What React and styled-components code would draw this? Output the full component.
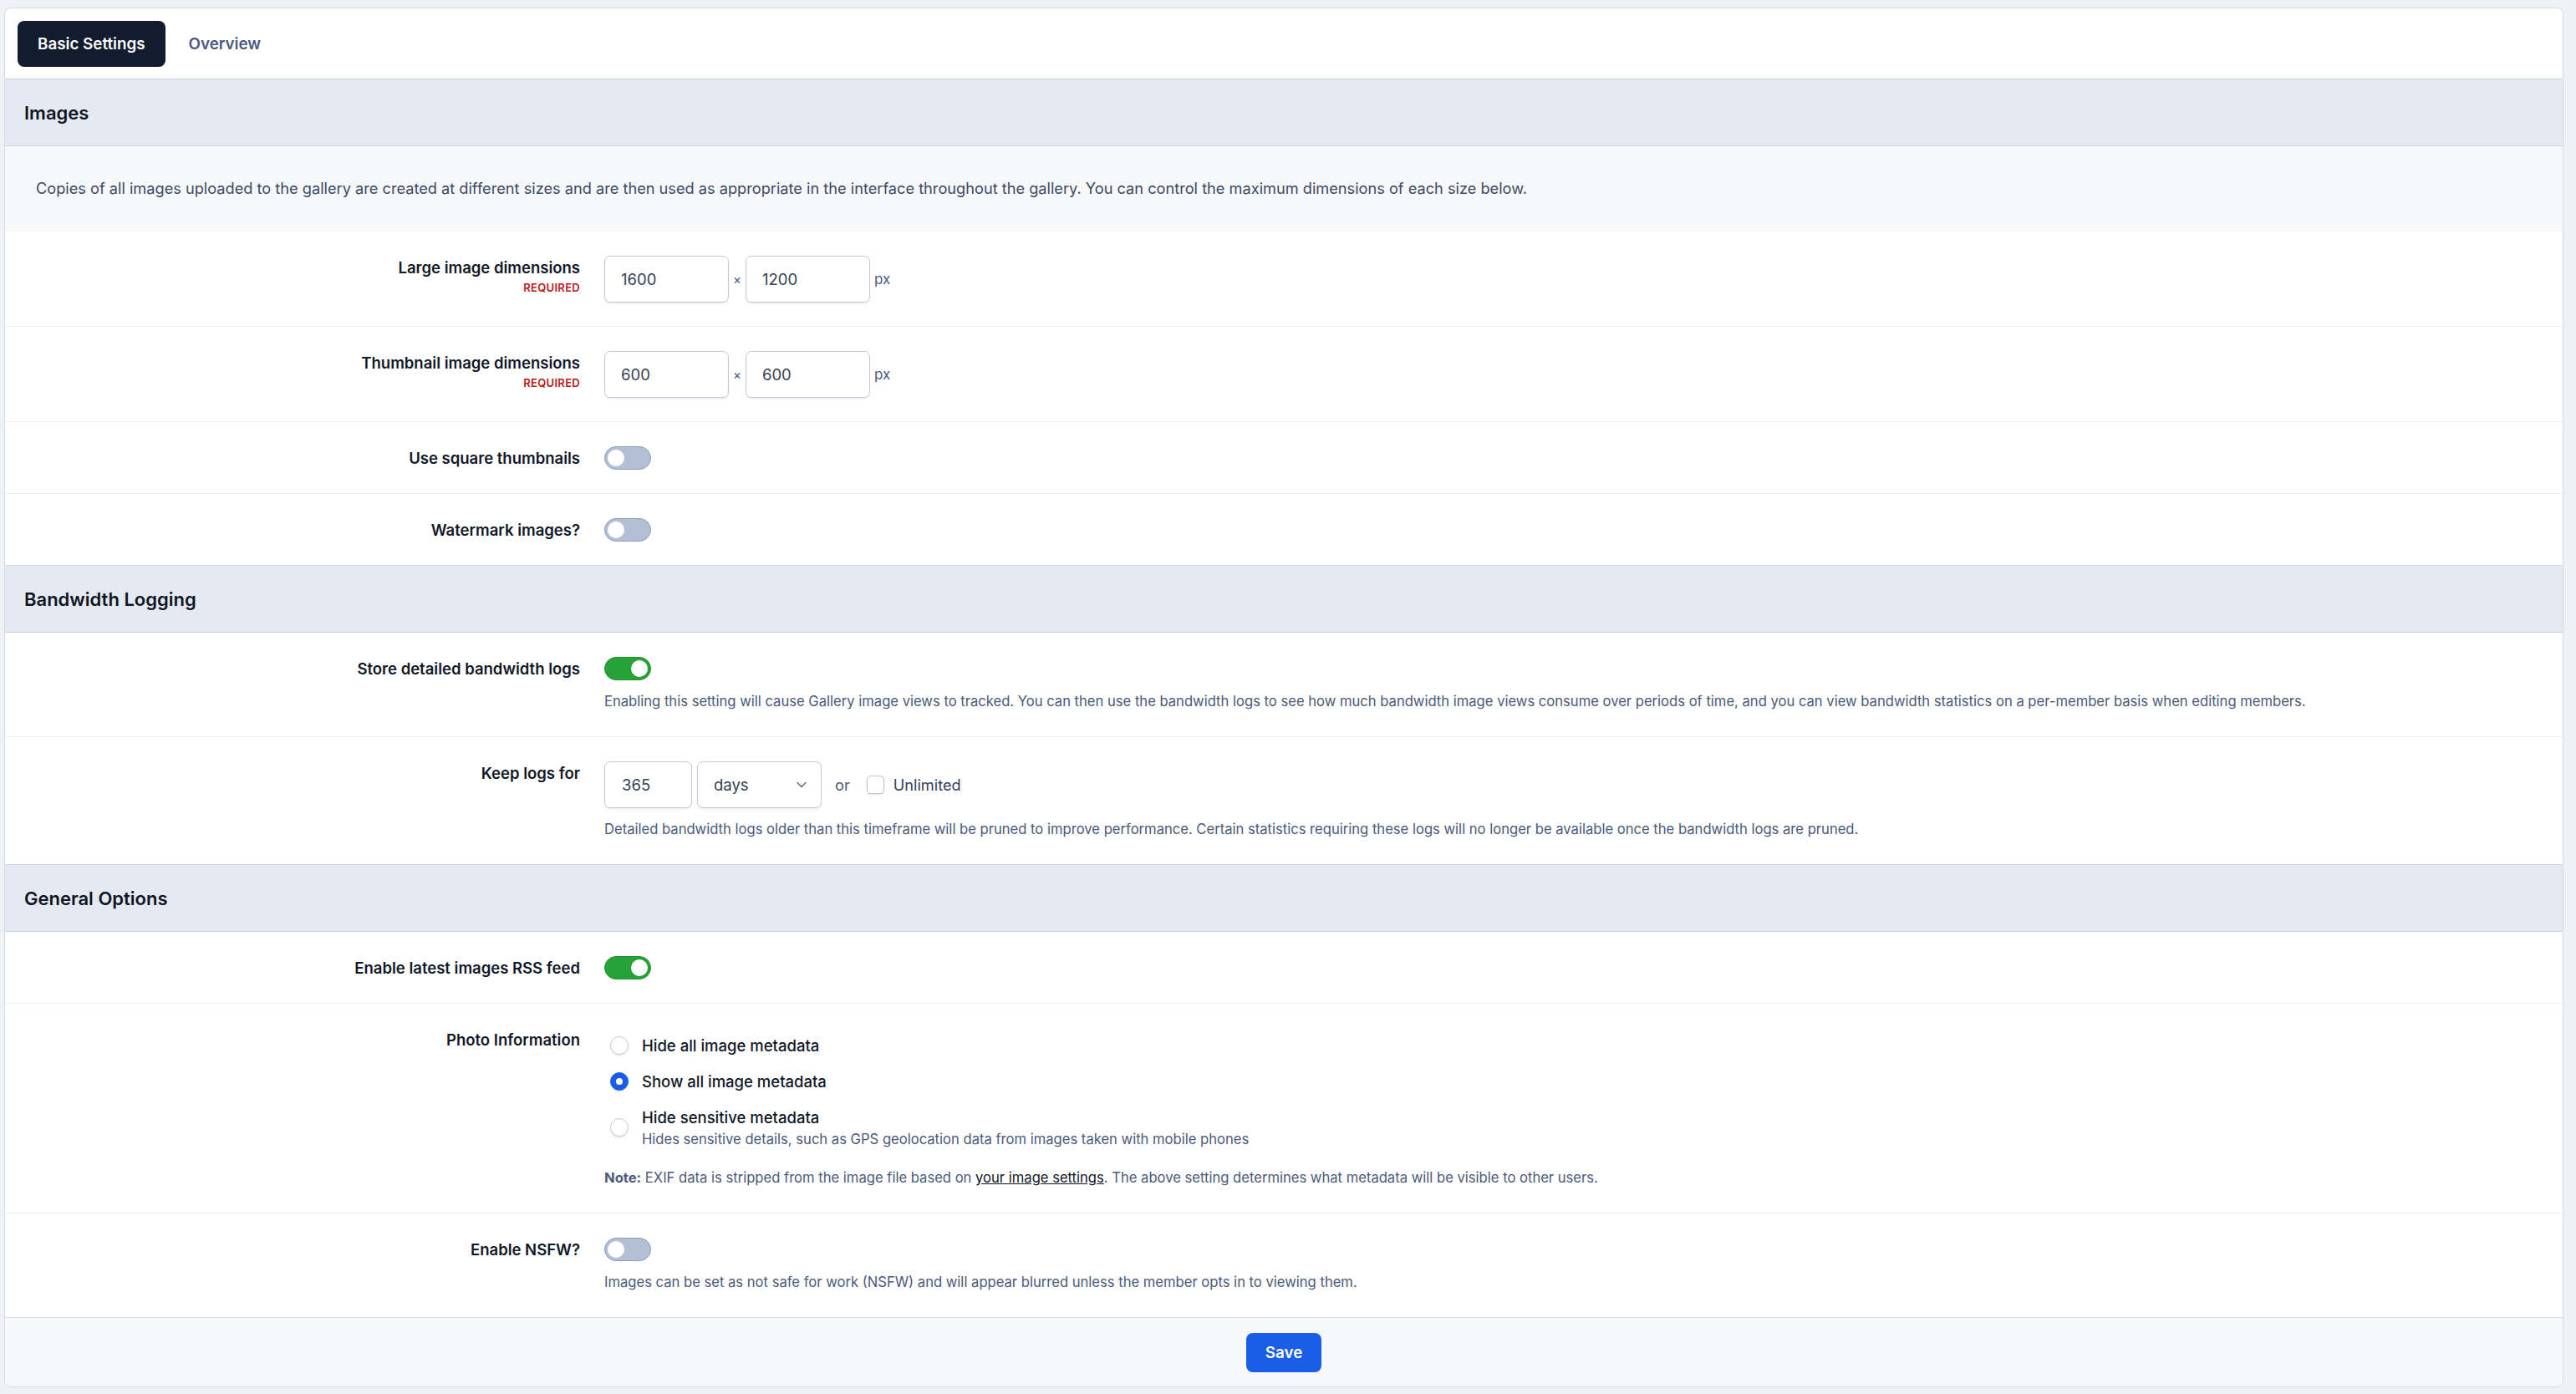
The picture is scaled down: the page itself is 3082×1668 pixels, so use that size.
import React from "react";
import styled, { createGlobalStyle, css } from "styled-components";

const GlobalStyle = createGlobalStyle`
  * { box-sizing: border-box; }
  html, body { margin: 0; padding: 0; }
  body {
    background: #eef1f5;
    font-family: Inter, "Noto Sans", "Liberation Sans", sans-serif;
    color: #111827;
    -webkit-font-smoothing: antialiased;
  }
`;

const Page = styled.div`
  padding: 9px 15px 7px 5px;
`;

const Card = styled.div`
  background: #ffffff;
  border: 1px solid #d6dce6;
  border-radius: 8px;
  overflow: hidden;
`;

const TabBar = styled.div`
  display: flex;
  gap: 4px;
  padding: 15px 15px 14px;
`;

const Tab = styled.button`
  height: 55px;
  padding: 0 24px;
  border: none;
  border-radius: 8px;
  font-family: inherit;
  font-size: 18.8px;
  font-weight: 600;
  cursor: pointer;
  background: ${(p) => (p.$active ? "#131c2e" : "transparent")};
  color: ${(p) => (p.$active ? "#ffffff" : "#4a5a7f")};
`;

const SectionHeader = styled.h2`
  margin: 0;
  height: 81px;
  display: flex;
  align-items: center;
  padding: 0 23px;
  background: #e5eaf2;
  border-top: 1px solid #ccd5e3;
  border-bottom: 1px solid #c6d1e2;
  font-size: 22px;
  font-weight: 600;
  color: #0f1523;
`;

const Description = styled.p`
  margin: 0;
  padding: 37px 37px 38px;
  background: #f7f8fa;
  font-size: 18.2px;
  line-height: 27px;
  color: #3d4a63;
`;

const Row = styled.div`
  display: grid;
  grid-template-columns: 688px 1fr;
  column-gap: 29px;
  padding: 29px 24px 28px 0;
  border-bottom: 1px solid #eceff3;
  &:last-child { border-bottom: none; }
`;

const LabelCol = styled.div`
  display: flex;
  flex-direction: column;
  align-items: flex-end;
  text-align: right;
`;

const Label = styled.label`
  font-size: 18.5px;
  line-height: 28px;
  font-weight: 600;
  color: #111827;
`;

const Required = styled.span`
  margin-top: 2px;
  font-size: 13px;
  line-height: 16px;
  font-weight: 600;
  letter-spacing: 0.3px;
  color: #b42020;
  text-transform: uppercase;
`;

const Controls = styled.div`
  display: flex;
  flex-direction: column;
  align-items: flex-start;
  min-width: 0;
`;

const InlineGroup = styled.div`
  display: flex;
  align-items: center;
`;

const fieldBase = css`
  height: 56px;
  border: 1px solid #c3c9d4;
  border-radius: 7px;
  background: #fff;
  box-shadow: 0 2px 2px rgba(15, 23, 42, 0.06);
  font-family: inherit;
  font-size: 18.5px;
  color: #334155;
`;

const TextInput = styled.input`
  ${fieldBase};
  width: ${(p) => p.$w || 149}px;
  padding: 0 ${(p) => p.$px || 19}px;
  outline: none;
`;

const Sep = styled.span`
  margin: 0 ${(p) => p.$m || 6}px;
  font-size: ${(p) => p.$fs || 17}px;
  color: #4a5a78;
`;

const SelectBox = styled.div`
  ${fieldBase};
  width: 149px;
  margin-left: 6px;
  display: flex;
  align-items: center;
  justify-content: space-between;
  padding: 0 17px 0 19px;
`;

const Checkbox = styled.span`
  display: inline-block;
  width: 21px;
  height: 22px;
  border: 1px solid #b9c1cd;
  border-radius: 5px;
  background: #fff;
  box-shadow: 0 2px 2px rgba(15, 23, 42, 0.08);
  margin: 0 11px 0 4px;
`;

const CheckLabel = styled.span`
  font-size: 18.2px;
  color: #334155;
`;

const ToggleTrack = styled.span`
  position: relative;
  display: inline-block;
  width: 56px;
  height: 28px;
  border-radius: 14px;
  background: ${(p) => (p.$on ? "#26a337" : "#b2bfd5")};
  border: 1px solid ${(p) => (p.$on ? "#21922f" : "#8e9cb8")};
  flex: none;
`;

const ToggleKnob = styled.span`
  position: absolute;
  top: 3px;
  left: ${(p) => (p.$on ? "31px" : "3px")};
  width: 20px;
  height: 20px;
  border-radius: 50%;
  background: #fff;
`;

const Help = styled.p`
  margin: 12px 0 0;
  font-size: 16.6px;
  line-height: 27px;
  color: #4b5a78;
  b { font-weight: 700; }
  a { color: #111827; text-decoration: underline; }
`;

const RadioList = styled.div`
  display: flex;
  flex-direction: column;
  gap: 15px;
  padding: 7px 0 0 7px;
`;

const RadioOption = styled.div`
  display: flex;
  align-items: center;
  gap: 16px;
`;

const RadioDot = styled.span`
  width: 22px;
  height: 22px;
  border-radius: 50%;
  flex: none;
  background: ${(p) => (p.$checked ? "#1a5ce6" : "#fff")};
  border: 1px solid ${(p) => (p.$checked ? "#1a5ce6" : "#c4cad4")};
  box-shadow: 0 2px 2px rgba(15, 23, 42, 0.08);
  display: flex;
  align-items: center;
  justify-content: center;
  &::after {
    content: "";
    width: 8px;
    height: 8px;
    border-radius: 50%;
    background: ${(p) => (p.$checked ? "#fff" : "transparent")};
  }
`;

const RadioText = styled.div`
  display: flex;
  flex-direction: column;
`;

const RadioLabel = styled.span`
  font-size: 18.5px;
  line-height: 28px;
  font-weight: 500;
  color: #111827;
`;

const RadioSub = styled.span`
  font-size: 16.6px;
  line-height: 24px;
  color: #4b5a78;
`;

const NoteHelp = styled(Help)`
  margin-top: 21px;
`;

const Footer = styled.div`
  display: flex;
  justify-content: center;
  padding: 18px 0 17px;
  background: #f7f8fa;
  border-top: 1px solid #d5dde8;
`;

const SaveButton = styled.button`
  height: 47px;
  width: 90px;
  border: none;
  border-radius: 8px;
  background: #1a5ee6;
  color: #fff;
  font-family: inherit;
  font-size: 18.8px;
  font-weight: 600;
  cursor: pointer;
`;

const Toggle = ({ on }) => (
  <ToggleTrack $on={on}>
    <ToggleKnob $on={on} />
  </ToggleTrack>
);

const Chevron = () => (
  <svg width="12" height="8" viewBox="0 0 12 8" fill="none">
    <path d="M1 1.5L6 6.5L11 1.5" stroke="#6b7280" strokeWidth="1.6" strokeLinecap="round" strokeLinejoin="round" />
  </svg>
);

const DimRow = ({ label, w, h }) => (
  <Row>
    <LabelCol>
      <Label>{label}</Label>
      <Required>Required</Required>
    </LabelCol>
    <Controls>
      <InlineGroup>
        <TextInput defaultValue={w} />
        <Sep $m={5} $fs={15}>×</Sep>
        <TextInput defaultValue={h} />
        <Sep $m={5}>px</Sep>
      </InlineGroup>
    </Controls>
  </Row>
);

const ToggleRow = ({ label, on, help }) => (
  <Row>
    <LabelCol>
      <Label>{label}</Label>
    </LabelCol>
    <Controls>
      <Toggle on={on} />
      {help && <Help>{help}</Help>}
    </Controls>
  </Row>
);

export default function App() {
  return (
    <>
      <GlobalStyle />
      <Page>
        <Card>
          <TabBar>
            <Tab $active>Basic Settings</Tab>
            <Tab>Overview</Tab>
          </TabBar>

          <SectionHeader>Images</SectionHeader>
          <Description>
            Copies of all images uploaded to the gallery are created at different sizes and are then used as appropriate in the interface throughout the gallery. You can control the maximum dimensions of each size below.
          </Description>
          <div>
            <DimRow label="Large image dimensions" w="1600" h="1200" />
            <DimRow label="Thumbnail image dimensions" w="600" h="600" />
            <ToggleRow label="Use square thumbnails" on={false} />
            <ToggleRow label="Watermark images?" on={false} />
          </div>

          <SectionHeader>Bandwidth Logging</SectionHeader>
          <div>
            <ToggleRow
              label="Store detailed bandwidth logs"
              on
              help="Enabling this setting will cause Gallery image views to tracked. You can then use the bandwidth logs to see how much bandwidth image views consume over periods of time, and you can view bandwidth statistics on a per-member basis when editing members."
            />
            <Row>
              <LabelCol>
                <Label>Keep logs for</Label>
              </LabelCol>
              <Controls>
                <InlineGroup>
                  <TextInput defaultValue="365" $w={105} $px={20} />
                  <SelectBox>
                    <span>days</span>
                    <Chevron />
                  </SelectBox>
                  <Sep $m={16} $fs={18.2}>or</Sep>
                  <Checkbox />
                  <CheckLabel>Unlimited</CheckLabel>
                </InlineGroup>
                <Help>
                  Detailed bandwidth logs older than this timeframe will be pruned to improve performance. Certain statistics requiring these logs will no longer be available once the bandwidth logs are pruned.
                </Help>
              </Controls>
            </Row>
          </div>

          <SectionHeader>General Options</SectionHeader>
          <div>
            <ToggleRow label="Enable latest images RSS feed" on />
            <Row>
              <LabelCol>
                <Label>Photo Information</Label>
              </LabelCol>
              <Controls>
                <RadioList>
                  <RadioOption>
                    <RadioDot />
                    <RadioText>
                      <RadioLabel>Hide all image metadata</RadioLabel>
                    </RadioText>
                  </RadioOption>
                  <RadioOption>
                    <RadioDot $checked />
                    <RadioText>
                      <RadioLabel>Show all image metadata</RadioLabel>
                    </RadioText>
                  </RadioOption>
                  <RadioOption>
                    <RadioDot />
                    <RadioText>
                      <RadioLabel>Hide sensitive metadata</RadioLabel>
                      <RadioSub>Hides sensitive details, such as GPS geolocation data from images taken with mobile phones</RadioSub>
                    </RadioText>
                  </RadioOption>
                </RadioList>
                <NoteHelp>
                  <b>Note:</b> EXIF data is stripped from the image file based on <a href="#settings">your image settings</a>. The above setting determines what metadata will be visible to other users.
                </NoteHelp>
              </Controls>
            </Row>
            <ToggleRow
              label="Enable NSFW?"
              on={false}
              help="Images can be set as not safe for work (NSFW) and will appear blurred unless the member opts in to viewing them."
            />
          </div>

          <Footer>
            <SaveButton>Save</SaveButton>
          </Footer>
        </Card>
      </Page>
    </>
  );
}
